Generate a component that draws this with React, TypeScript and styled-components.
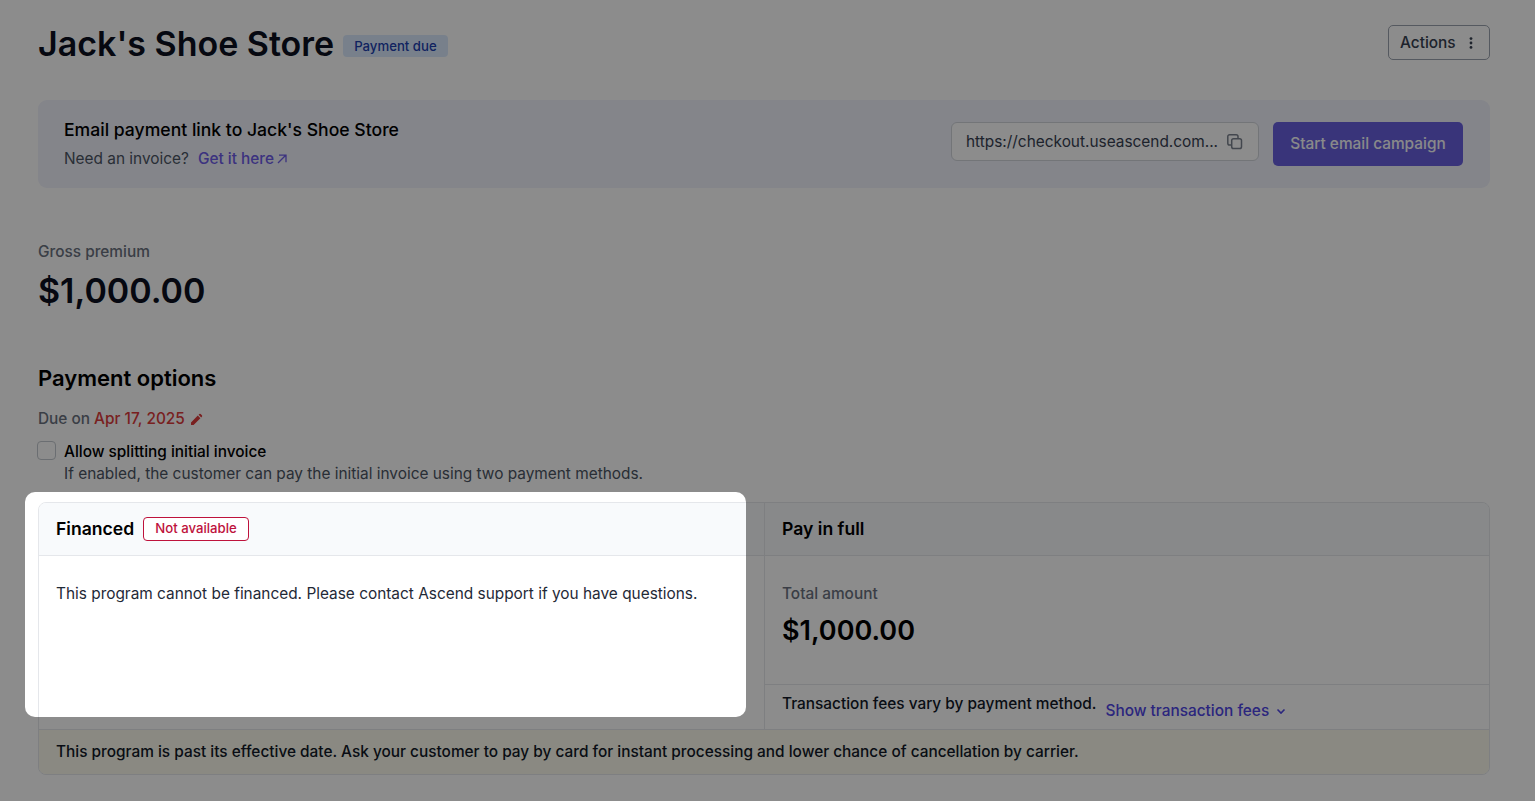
import styled, { createGlobalStyle } from "styled-components";

const GlobalStyle = createGlobalStyle`
  * {
    box-sizing: border-box;
  }

  body {
    margin: 0;
    background-color: white;
    font-family: "Inter", "Liberation Sans", sans-serif;
    font-size: 15.4px;
    line-height: 22px;
    color: #111827;
    overflow: hidden;
  }
`;

const Page = styled.main`
  position: relative;
  width: 1535px;
  height: 801px;
  padding: 22px 45px 0 38px;
  overflow: hidden;
`;

const Header = styled.header`
  display: flex;
  align-items: flex-start;
  height: 78px;
`;

const Title = styled.h1`
  margin: 0;
  font-size: 34px;
  font-weight: 600;
  line-height: 44px;
  color: #0b1020;
`;

const DueBadge = styled.span`
  margin: 13px auto 0 9px;
  padding: 0 11px;
  height: 22px;
  border-radius: 4px;
  background-color: #dbeafe;
  color: #1e40af;
  font-size: 13.2px;
  font-weight: 500;
`;

const ActionsButton = styled.button`
  display: flex;
  align-items: center;
  justify-content: space-between;
  width: 102px;
  height: 35px;
  margin-top: 3px;
  padding: 0 11px;
  border: 1px solid #9ca3af;
  border-radius: 5px;
  background-color: white;
  color: #374151;
  font: inherit;
  font-weight: 500;
`;

const Banner = styled.section`
  display: flex;
  align-items: flex-start;
  height: 88px;
  padding: 22px 27px 0 26px;
  border-radius: 9px;
  background-color: #f0f2fc;
`;

const BannerText = styled.div`
  flex: 1;
  padding-top: -4px;
`;

const BannerTitle = styled.h2`
  margin: -4px 0 6px;
  font-size: 17.6px;
  font-weight: 500;
  line-height: 24px;
  color: black;
`;

const Invoice = styled.div`
  display: flex;
  color: #4b5563;
`;

const Link = styled.a<{ $color?: string }>`
  display: flex;
  align-items: center;
  margin-left: 9px;
  color: ${(props) => props.$color || "#6d5ce8"};
  font-weight: 500;
`;

const UrlBox = styled.div`
  display: flex;
  align-items: center;
  justify-content: space-between;
  width: 308px;
  height: 39px;
  padding: 0 14px;
  border: 1px solid #d1d5db;
  border-radius: 6px;
  background-color: white;
  color: #374151;
`;

const CampaignButton = styled.button`
  width: 190px;
  height: 44px;
  margin-left: 14px;
  padding: 0;
  border: none;
  border-radius: 5px;
  background-color: #6860de;
  color: #f9fafb;
  font: inherit;
  font-weight: 500;
`;

const Label = styled.div`
  color: #6b7280;
  font-weight: 500;
`;

const Premium = styled.section`
  padding-top: 53px;
`;

const Amount = styled.div<{ $large?: boolean }>`
  margin-top: ${(props) => (props.$large ? "6px" : "5px")};
  font-size: ${(props) => (props.$large ? "34px" : "27px")};
  line-height: ${(props) => (props.$large ? "44px" : "42px")};
  font-weight: 600;
  color: ${(props) => (props.$large ? "#0b1020" : "black")};
`;

const SectionTitle = styled.h2`
  margin: 50px 0 15px;
  font-size: 22px;
  font-weight: 600;
  line-height: 30px;
  color: black;
`;

const DueDate = styled.div`
  display: flex;
  align-items: center;
  color: #6b7280;
  font-weight: 500;
`;

const DateValue = styled.span`
  margin: 0 5px 0 4px;
  color: #dc3b3b;
`;

const SplitOption = styled.label`
  display: flex;
  margin: 11px 0 17px -1px;
`;

const Checkbox = styled.span`
  width: 19px;
  height: 19px;
  margin-right: 8px;
  border: 1px solid #c4c8cf;
  border-radius: 4px;
`;

const SplitTitle = styled.div`
  color: black;
  font-weight: 500;
`;

const SplitHint = styled.div`
  color: #4b5563;
`;

const Options = styled.section`
  display: grid;
  grid-template-columns: 725px 1fr;
  grid-template-rows: 226px 1fr;
  height: 273px;
  border: 1px solid #e5e7eb;
  border-radius: 8px;
  overflow: hidden;
`;

const Option = styled.div<{ $divided?: boolean }>`
  display: flex;
  flex-direction: column;
  border-left: ${(props) => (props.$divided ? "1px solid #e5e7eb" : "none")};
`;

const OptionHeader = styled.div`
  display: flex;
  align-items: center;
  height: 53px;
  padding: 0 17px;
  border-bottom: 1px solid #e5e7eb;
  background-color: #f8fafc;
  color: black;
  font-size: 17.6px;
  font-weight: 600;
`;

const UnavailableBadge = styled.span`
  height: 24px;
  margin-left: 9px;
  padding: 0 11px;
  border: 1px solid #be123c;
  border-radius: 4px;
  background-color: white;
  color: #be123c;
  font-size: 13.2px;
  font-weight: 500;
  line-height: 21px;
`;

const OptionBody = styled.div`
  flex: 1;
  padding: 27px 17px 0;
  color: #1f2937;
`;

const Fees = styled.div`
  display: flex;
  height: 45px;
  padding: 8px 17px 0;
  border-top: 1px solid #e5e7eb;
  font-weight: 500;
`;

const Warning = styled.div`
  grid-column: 1 / -1;
  padding: 11px 17px 0;
  border-top: 1px solid #e5e7eb;
  background-color: #fbfaed;
  font-weight: 500;
`;

/* everything outside the spotlight is dimmed by its shadow */
const Spotlight = styled.div`
  position: absolute;
  top: 492px;
  left: 25px;
  width: 721px;
  height: 225px;
  border-radius: 10px;
  box-shadow: 0 0 0 2000px rgba(0, 0, 0, 0.45);
  pointer-events: none;
`;

const Icon = styled.svg<{ $gap?: number }>`
  flex: none;
  margin-left: ${(props) => props.$gap || 0}px;
`;

function App() {
  return (
    <>
      <GlobalStyle />
      <Page>
        <Header>
          <Title>Jack's Shoe Store</Title>
          <DueBadge>Payment due</DueBadge>
          <ActionsButton>
            Actions
            <Icon width="14" height="14" viewBox="0 0 14 14" fill="#374151">
              <circle cx="7" cy="2.6" r="1.4" />
              <circle cx="7" cy="7" r="1.4" />
              <circle cx="7" cy="11.4" r="1.4" />
            </Icon>
          </ActionsButton>
        </Header>
        <Banner>
          <BannerText>
            <BannerTitle>Email payment link to Jack's Shoe Store</BannerTitle>
            <Invoice>
              <span>Need an invoice?</span>
              <Link>
                Get it here
                <Icon $gap={3} width="10" height="10" viewBox="0 0 10 10" fill="none" stroke="#6d5ce8" strokeWidth="1.3">
                  <path d="M1 9 8.7 1.3M2 1.2h7v7" />
                </Icon>
              </Link>
            </Invoice>
          </BannerText>
          <UrlBox>
            https://checkout.useascend.com...
            <Icon width="18" height="18" viewBox="0 0 18 18" fill="none" stroke="#7b828e" strokeWidth="1.5">
              <rect x="5.7" y="5.7" width="9.8" height="9.8" rx="1.8" />
              <path d="M5.7 12H3.6a1.8 1.8 0 0 1-1.8-1.8V3.6a1.8 1.8 0 0 1 1.8-1.8h6.6A1.8 1.8 0 0 1 12 3.6v2.1" />
            </Icon>
          </UrlBox>
          <CampaignButton>Start email campaign</CampaignButton>
        </Banner>
        <Premium>
          <Label>Gross premium</Label>
          <Amount $large>$1,000.00</Amount>
        </Premium>
        <SectionTitle>Payment options</SectionTitle>
        <DueDate>
          Due on <DateValue>Apr 17, 2025</DateValue>
          <Icon width="13" height="13" viewBox="0 0 13 13" fill="#dc3b3b">
            <path d="M1 12v-2.6l6.8-6.8 2.6 2.6L3.6 12zM8.6 1.8l.7-.7a1 1 0 0 1 1.4 0l1.2 1.2a1 1 0 0 1 0 1.4l-.7.7z" />
          </Icon>
        </DueDate>
        <SplitOption>
          <Checkbox />
          <div>
            <SplitTitle>Allow splitting initial invoice</SplitTitle>
            <SplitHint>If enabled, the customer can pay the initial invoice using two payment methods.</SplitHint>
          </div>
        </SplitOption>
        <Options>
          <Option>
            <OptionHeader>
              Financed
              <UnavailableBadge>Not available</UnavailableBadge>
            </OptionHeader>
            <OptionBody>This program cannot be financed. Please contact Ascend support if you have questions.</OptionBody>
          </Option>
          <Option $divided>
            <OptionHeader>Pay in full</OptionHeader>
            <OptionBody>
              <Label>Total amount</Label>
              <Amount>$1,000.00</Amount>
            </OptionBody>
            <Fees>
              Transaction fees vary by payment method.
              <Link $color="#4f46e5">
                Show transaction fees
                <Icon $gap={7} width="10" height="10" viewBox="0 0 10 10" fill="none" stroke="#4f46e5" strokeWidth="1.6">
                  <path d="M1.5 3.5 5 7l3.5-3.5" />
                </Icon>
              </Link>
            </Fees>
          </Option>
          <Warning>
            This program is past its effective date. Ask your customer to pay by card for instant processing and lower
            chance of cancellation by carrier.
          </Warning>
        </Options>
        <Spotlight />
      </Page>
    </>
  );
}

export default App;
